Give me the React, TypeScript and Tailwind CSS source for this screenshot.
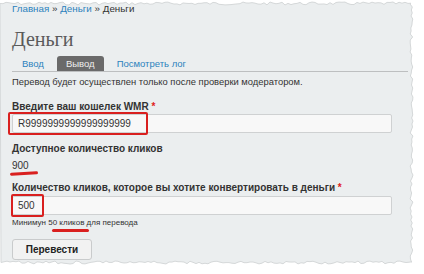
import React from 'react';

// jagged edge for the torn-paper look
function tornPath(w: number, h: number) {
    let seed = 7;
    const rnd = () => {
        seed = (seed * 9301 + 49297) % 233280;
        return seed / 233280;
    };
    const pts: string[] = [];
    for (let x = 0; x <= w - 12; x += 3) pts.push(`${x},${2 + rnd() * 3}`);
    for (let y = 4; y <= h - 10; y += 3) pts.push(`${w - 14 + rnd() * 3},${y}`);
    for (let x = w - 12; x >= 0; x -= 3) pts.push(`${x},${h - 13 + rnd() * 3}`);
    return `M${pts.join(' L')} Z`;
}

function Marker({className}: {className: string}) {
    return <span className={`absolute h-[3px] rounded-full bg-[#d9201f] ${className}`}/>;
}

function App() {
    return (
        <div className="relative w-[424px] h-[274px] bg-white overflow-hidden" style={{fontFamily: '"Liberation Sans", Arial, sans-serif'}}>
            <svg className="absolute inset-0" width="424" height="274">
                <path d={tornPath(424, 274)} fill="#ebeeef" stroke="#d5d8d9" strokeWidth="1"/>
            </svg>

            <div className="relative flex flex-col px-3 pt-[2px] text-[#333]">
                <div className="text-[9.8px] leading-[14px]">
                    <span className="text-[#2b82bd]">Главная</span> » <span className="text-[#2b82bd]">Деньги</span> » Деньги
                </div>

                <h1 className="mt-[12px] text-[20px] leading-[22px] text-[#5a5a5a]" style={{fontFamily: '"Liberation Serif", serif'}}>Деньги</h1>

                <div className="mt-[6px] w-[396px] flex items-end gap-[13px] border-b border-[#bdbfc0] pl-[10px] text-[9.5px] leading-[15px]">
                    <span className="text-[#2b82bd]">Ввод</span>
                    <span className="rounded-t-[3px] bg-[#6a6a6a] px-[9px] text-[#eee]">Вывод</span>
                    <span className="text-[#2b82bd]">Посмотреть лог</span>
                </div>

                <p className="mt-[3px] text-[9.4px] leading-[14px]">Перевод будет осуществлен только после проверки модератором.</p>

                <label className="mt-[11px] text-[10px] leading-[13px] font-bold">
                    Введите ваш кошелек WMR <span className="text-[#e02020]">*</span>
                </label>
                <div className="relative mt-[1px]">
                    <div className="h-[19px] w-[380px] rounded-[2px] border border-[#cfd1d2] bg-[#f8f8f8] pl-[5px] text-[10px] leading-[17px]">R9999999999999999999</div>
                    <span className="absolute -left-[4px] -top-[2px] h-[23px] w-[140px] rounded-[2px] border-2 border-[#d9201f]"/>
                </div>

                <div className="mt-[9px] text-[10px] leading-[13px] font-bold">Доступное количество кликов</div>
                <div className="relative mt-[4px] text-[10px] leading-[13px]">
                    900
                    <Marker className="left-[-2px] top-[13px] w-[28px] -rotate-3"/>
                </div>

                <label className="mt-[9px] text-[10px] leading-[13px] font-bold">
                    Количество кликов, которое вы хотите конвертировать в деньги <span className="text-[#e02020]">*</span>
                </label>
                <div className="relative mt-[2px]">
                    <div className="h-[19px] w-[380px] rounded-[2px] border border-[#cfd1d2] bg-[#f8f8f8] pl-[5px] text-[10px] leading-[17px]">500</div>
                    <span className="absolute -left-[1px] -top-[2px] h-[23px] w-[33px] rounded-[2px] border-2 border-[#d9201f]"/>
                </div>

                <div className="relative mt-[2px] text-[8px] leading-[12px]">
                    Минимун 50 кликов для перевода
                    <Marker className="left-[40px] top-[12px] w-[37px]"/>
                </div>

                <div className="mt-[7px]">
                    <button className="h-[21px] w-[80px] rounded-[3px] border border-[#c9cbcc] bg-[#f2f2f2] text-[10px] font-bold text-[#222]">Перевести</button>
                </div>
            </div>
        </div>
    );
}

export default App;
